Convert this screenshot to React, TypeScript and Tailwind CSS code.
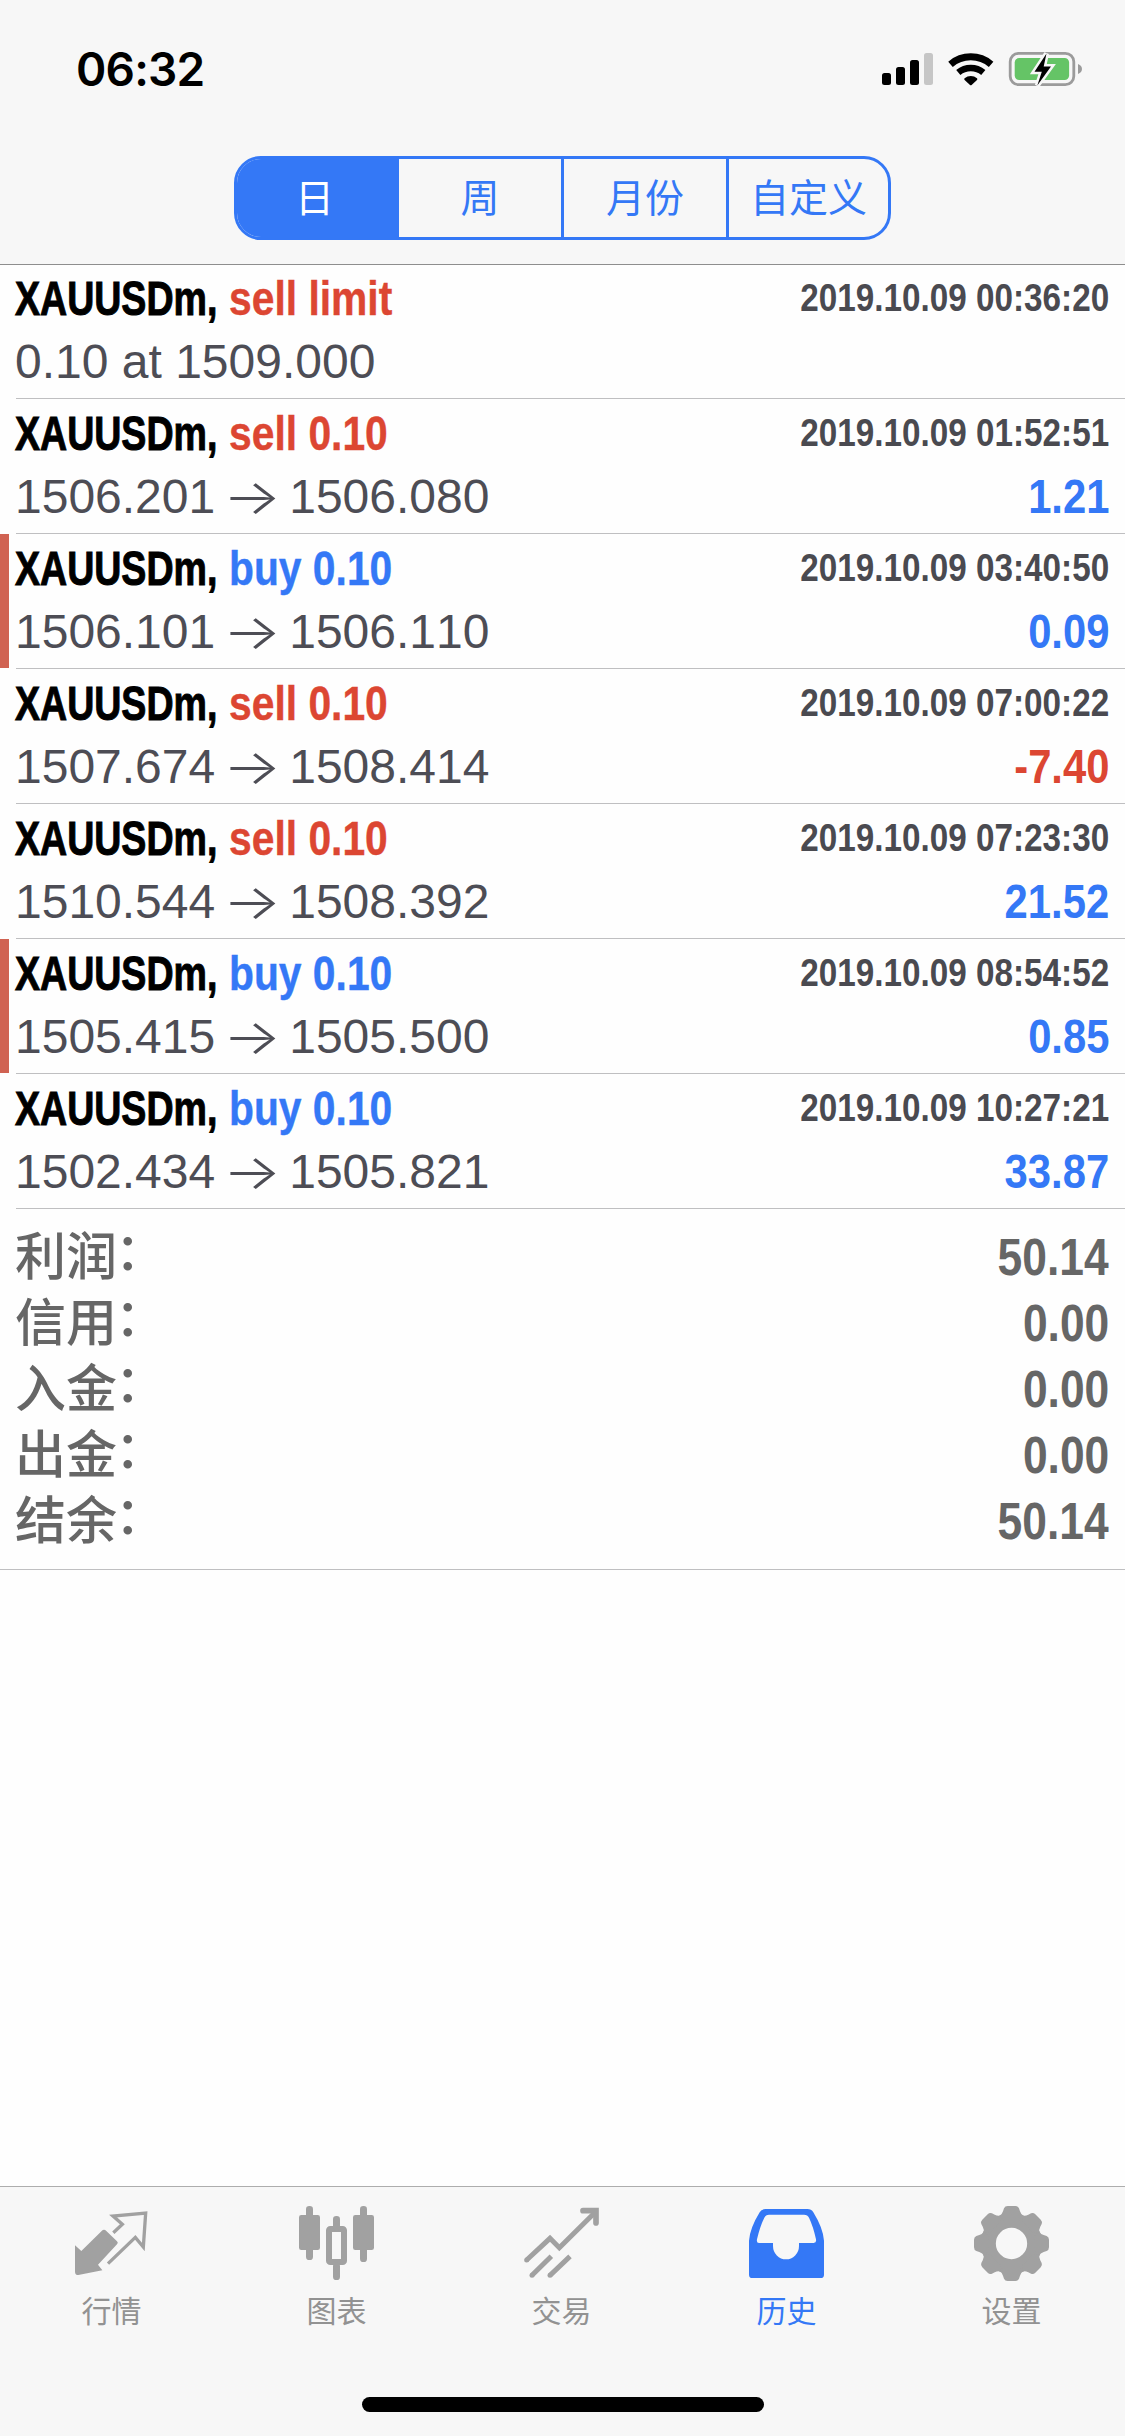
import type { ReactNode } from 'react';
import { clsx } from 'clsx';

type Deal = {
  symbol: string;
  side: 'buy' | 'sell';
  label: string;
  time: string;
  open?: string;
  close?: string;
  note?: string;
  profit?: string;
  marked?: boolean;
};

const DEALS: Deal[] = [
  { symbol: 'XAUUSDm,', side: 'sell', label: 'sell limit', time: '2019.10.09 00:36:20', note: '0.10 at 1509.000' },
  { symbol: 'XAUUSDm,', side: 'sell', label: 'sell 0.10', time: '2019.10.09 01:52:51', open: '1506.201', close: '1506.080', profit: '1.21' },
  { symbol: 'XAUUSDm,', side: 'buy', label: 'buy 0.10', time: '2019.10.09 03:40:50', open: '1506.101', close: '1506.110', profit: '0.09', marked: true },
  { symbol: 'XAUUSDm,', side: 'sell', label: 'sell 0.10', time: '2019.10.09 07:00:22', open: '1507.674', close: '1508.414', profit: '-7.40' },
  { symbol: 'XAUUSDm,', side: 'sell', label: 'sell 0.10', time: '2019.10.09 07:23:30', open: '1510.544', close: '1508.392', profit: '21.52' },
  { symbol: 'XAUUSDm,', side: 'buy', label: 'buy 0.10', time: '2019.10.09 08:54:52', open: '1505.415', close: '1505.500', profit: '0.85', marked: true },
  { symbol: 'XAUUSDm,', side: 'buy', label: 'buy 0.10', time: '2019.10.09 10:27:21', open: '1502.434', close: '1505.821', profit: '33.87' },
];

const TOTALS = [
  { label: '利润', value: '50.14' },
  { label: '信用', value: '0.00' },
  { label: '入金', value: '0.00' },
  { label: '出金', value: '0.00' },
  { label: '结余', value: '50.14' },
];

const PERIODS = [
  { label: '日', width: 'w-[159px]' },
  { label: '周', width: 'w-[165px]' },
  { label: '月份', width: 'w-[165px]' },
  { label: '自定义', width: 'w-[162px]' },
];

function StatusIcons() {
  return (
    <svg className="h-[45px] w-[225px]" viewBox="0 0 225 45">
      <rect x="12" y="28" width="9" height="12" rx="2.5" />
      <rect x="26" y="22" width="9" height="18" rx="2.5" />
      <rect x="40" y="15" width="9" height="25" rx="2.5" />
      <rect x="54" y="8" width="9" height="32" rx="2.5" fill="#c6c6c6" />
      <g fill="none" stroke="#000">
        <path d="M80.5 19.3a31.4 31.4 0 0 1 40.6 0" strokeWidth="7" />
        <path d="M88.3 27.5a19.6 19.6 0 0 1 25 0" strokeWidth="6.6" />
      </g>
      <path d="M94.6 33.3a9.6 9.6 0 0 1 12.4 0q.8.8 0 1.6l-5.4 5q-.8.7-1.6 0l-5.4-5q-.8-.8 0-1.6z" />
      <rect x="140.2" y="8.3" width="63.6" height="31.4" rx="8.5" fill="none" stroke="#9b9b9b" strokeWidth="2.8" />
      <rect x="144.7" y="13" width="54.4" height="22" rx="4.5" fill="#65c466" />
      <path d="M208 19q4 1.6 4 5t-4 5z" fill="#9b9b9b" />
      <path
        d="M176.5 8.5 164.5 26.8h7.3l-4.5 13.7 13.7-18.9h-7.3z"
        fill="#000"
        stroke="#f7f7f7"
        strokeWidth="5"
        paintOrder="stroke"
      />
    </svg>
  );
}

function QuotesIcon() {
  return (
    <>
      <path d="M3 118 22 135 83 75q7-7 14 0l32 31q5 5 0 9L72 176l13 17-72 14q-10 0-10-10z" />
      <path d="m118 80 27-25-28-25 98-9-7 102-24-29-82 79" fill="none" stroke="currentColor" strokeWidth="10" />
    </>
  );
}

function ChartIcon() {
  return (
    <>
      <rect y="27" width="63" height="105" rx="7" />
      <rect x="21" width="21" height="162" rx="10" />
      <rect x="90" y="69" width="45" height="99" rx="4" fill="none" stroke="currentColor" strokeWidth="18" />
      <rect x="102" y="30" width="21" height="44" rx="10" />
      <rect x="102" y="170" width="21" height="52" rx="10" />
      <rect x="162" y="27" width="63" height="105" rx="7" />
      <rect x="183" width="21" height="168" rx="10" />
    </>
  );
}

function TradeIcon() {
  return (
    <>
      <g fill="none" stroke="currentColor" strokeWidth="15">
        <path d="m8 162 70-65 28 28L212 20" />
        <path d="m24 208 58-57M78 208l60-57" />
        <path d="M177 14h39v37" strokeWidth="17" strokeLinecap="round" />
      </g>
      <circle cx="8" cy="162" r="7.5" />
      <circle cx="24" cy="208" r="7.5" />
      <circle cx="78" cy="208" r="7.5" />
    </>
  );
}

function HistoryIcon() {
  return (
    <path
      fillRule="evenodd"
      d="M50 9H175Q187 9 193 19 222 66 225 104V206Q225 216 215 216H10Q0 216 0 206V104Q3 66 32 19 38 9 50 9ZM60 26Q50 26 46 35 33 62 24 100 22 111 30 111H72V120A39 40 0 0 0 150 120V111H194Q203 111 201 100 193 62 180 35 176 26 165 26Z"
    />
  );
}

function SettingsIcon() {
  return (
    <>
      <circle cx="112.5" cy="112.5" r="69" fill="none" stroke="currentColor" strokeWidth="44" />
      {[0, 45, 90, 135, 180, 225, 270, 315].map((angle) => (
        <path
          key={angle}
          transform={`rotate(${angle} 112.5 112.5)`}
          d="M76 30Q84 26 87 16L90 7Q93 0 101 0H124Q132 0 135 7L138 16Q141 26 149 30L134 44H91Z"
        />
      ))}
    </>
  );
}

const TABS: { label: string; icon: ReactNode; active?: boolean }[] = [
  { label: '行情', icon: <QuotesIcon /> },
  { label: '图表', icon: <ChartIcon /> },
  { label: '交易', icon: <TradeIcon /> },
  { label: '历史', icon: <HistoryIcon />, active: true },
  { label: '设置', icon: <SettingsIcon /> },
];

function DealRow({ deal }: { deal: Deal }) {
  return (
    <li className="relative h-[135px] pl-4">
      {deal.marked && <span className="absolute top-0 left-0 h-[134px] w-[9px] bg-[#d06252]" />}
      <div className="h-full border-b border-[#bfbfc1] pt-[5px] pr-4">
        <div className="-ml-px flex h-[60px] justify-between text-[48px] leading-[60px] font-bold whitespace-nowrap">
          <div className="flex">
            <span className="w-[214px] origin-left scale-x-[0.782] text-black [-webkit-text-stroke:1px]">
              {deal.symbol}
            </span>
            <span
              className={clsx(
                'origin-left scale-x-[0.85] [-webkit-text-stroke:0.4px]',
                deal.side === 'sell' ? 'text-[#dc4632]' : 'text-[#3478f6]'
              )}
            >
              {deal.label}
            </span>
          </div>
          <span className="origin-right scale-x-[0.853] text-[39px] leading-[58px] text-[#4a4a50]">{deal.time}</span>
        </div>
        <div className="-ml-px flex h-[68px] justify-between text-[48px] leading-[65px] whitespace-nowrap">
          {deal.note ? (
            <span className="text-[#4d4d55]">{deal.note}</span>
          ) : (
            <div className="flex text-[#4d4d55]">
              <span>{deal.open}</span>
              <span className="flex w-[74px] scale-x-[1.28] justify-center font-['Inter'] font-light">→</span>
              <span>{deal.close}</span>
            </div>
          )}
          {deal.profit && (
            <span
              className={clsx(
                'origin-right scale-x-[0.87] font-bold',
                deal.profit.startsWith('-') ? 'text-[#dc4632]' : 'text-[#3478f6]'
              )}
            >
              {deal.profit}
            </span>
          )}
        </div>
      </div>
    </li>
  );
}

export default function App() {
  return (
    <div className="flex h-[2436px] w-[1125px] flex-col overflow-hidden bg-[#fefefe] font-['Liberation_Sans','Noto_Sans_CJK_SC',sans-serif] [font-kerning:none]">
      <header className="relative z-10 h-[264px] shrink-0 bg-[#f7f7f7] shadow-[0_1px_0_#8e8e8e]">
        <div className="flex h-[156px] items-start justify-between pt-[45px] pr-[30px] pl-[76px]">
          <span className="font-['Inter'] text-[46px] leading-[48px] font-semibold tracking-[-0.8px] text-black [font-kerning:normal]">
            06:32
          </span>
          <StatusIcons />
        </div>
        <div className="ml-[234px] flex h-[84px] w-[657px] overflow-hidden rounded-[27px] border-3 border-[#3478f6]">
          {PERIODS.map(({ label, width }, i) => (
            <button
              key={label}
              type="button"
              className={clsx(
                'pt-px text-center text-[39px] leading-[78px]',
                width,
                i === 0 ? 'bg-[#3478f6] pr-1 text-white' : 'border-l-3 border-[#3478f6] text-[#3478f6]'
              )}
            >
              {label}
            </button>
          ))}
        </div>
      </header>

      <main className="flex-1">
        <ul>
          {DEALS.map((deal) => (
            <DealRow key={deal.time} deal={deal} />
          ))}
        </ul>
        <div className="border-b border-[#bfbfc1] py-[15px] pr-4 pl-[15px] text-[51px] text-[#666]">
          {TOTALS.map(({ label, value }) => (
            <div key={label} className="flex h-[66px] justify-between whitespace-nowrap">
              <div className="flex leading-[68px] font-medium">
                <span>{label}</span>
                <span className="-mt-[5px] -ml-0.5">：</span>
              </div>
              <span className="origin-right scale-x-[0.87] leading-[67px] font-bold">{value}</span>
            </div>
          ))}
        </div>
      </main>

      <nav className="flex h-[250px] shrink-0 flex-col border-t border-[#adadad] bg-[#f7f7f7]">
        <div className="flex h-[210px] pt-[19px]">
          {TABS.map(({ label, icon, active }) => (
            <button
              key={label}
              type="button"
              className={clsx(
                'flex flex-1 flex-col items-center pr-0.5',
                active ? 'text-[#3478f6]' : 'text-[#a1a1a1]'
              )}
            >
              <svg className="h-[75px] w-[75px]" viewBox="0 0 225 225" fill="currentColor">
                {icon}
              </svg>
              <span className={clsx('mt-2.5 text-[30px] leading-[42px]', !active && 'text-[#929292]')}>{label}</span>
            </button>
          ))}
        </div>
        <div className="mx-auto h-[15px] w-[402px] rounded-full bg-black" />
      </nav>
    </div>
  );
}
